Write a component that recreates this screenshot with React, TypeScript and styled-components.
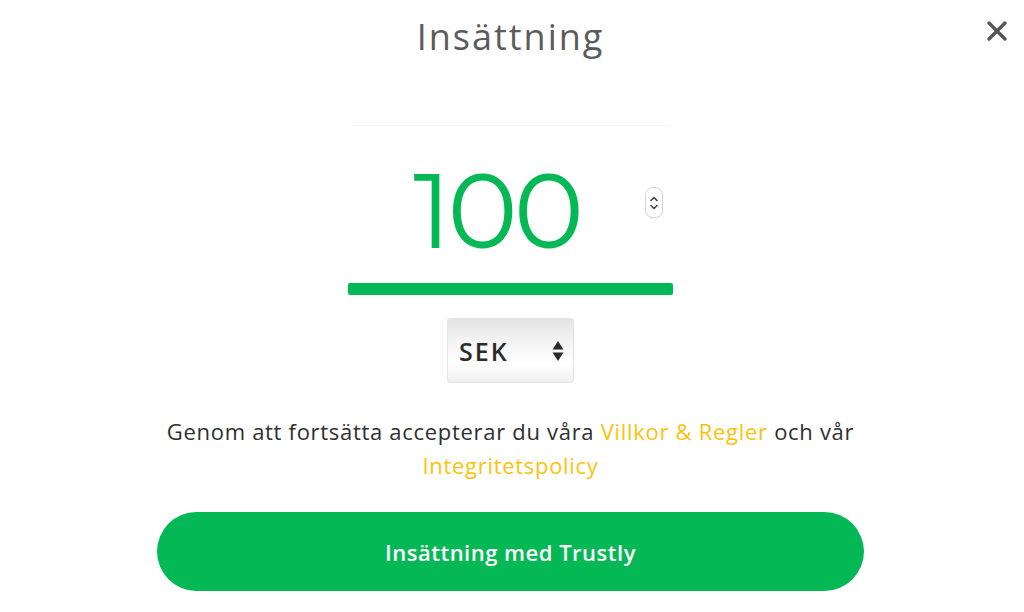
import React from 'react';
import styled, { createGlobalStyle } from 'styled-components';

const GlobalStyle = createGlobalStyle`
    html, body {
        margin: 0;
        padding: 0;
        background: #ffffff;
        font-family: "Open Sans", "Noto Sans", sans-serif;
    }
`;

const Page = styled.div`
    width: 1024px;
    height: 612px;
    box-sizing: border-box;
    padding-right: 3px;
    display: flex;
    flex-direction: column;
    align-items: center;
    overflow: hidden;
`;

const Header = styled.div`
    position: relative;
    width: 100%;
    height: 80px;
    display: flex;
    justify-content: center;
`;

const Title = styled.h1`
    margin: 12px 0 0;
    font-family: "Open Sans", sans-serif;
    font-weight: 400;
    font-size: 36px;
    line-height: 50px;
    letter-spacing: 2px;
    color: #5b5b5b;
`;

const CloseButton = styled.button`
    position: absolute;
    right: 11px;
    top: 18px;
    width: 26px;
    height: 26px;
    padding: 0;
    border: 0;
    background: transparent;
    cursor: pointer;
`;

const AmountBox = styled.div`
    margin-top: 45px;
    width: 325px;
    border-top: 1px solid #f1f4f2;
    border-radius: 6px 6px 0 0;
`;

const AmountRow = styled.div`
    height: 157px;
    display: flex;
    align-items: center;
`;

const AmountValue = styled.div`
    flex: 1;
    text-align: center;
    font-family: "Montserrat", "Open Sans", sans-serif;
    font-weight: 400;
    font-size: 106px;
    line-height: 1;
    color: #05b856;
    padding-top: 10px;
    letter-spacing: -4px;
`;

const Spinner = styled.div`
    width: 16px;
    height: 29px;
    margin-right: 10px;
    margin-top: -4px;
    border: 1px solid #d6d6d6;
    border-radius: 8px;
    display: flex;
    align-items: center;
    justify-content: center;
    box-shadow: 0 1px 1px rgba(0, 0, 0, 0.06);
`;

const Underline = styled.div`
    height: 12px;
    background: #05b856;
    border-radius: 2px;
`;

const CurrencySelect = styled.div`
    margin-top: 23px;
    width: 127px;
    height: 65px;
    box-sizing: border-box;
    padding: 0 10px 0 12px;
    border-radius: 4px;
    background: linear-gradient(#e2e2e2 0%, #f3f3f3 35%, #ffffff 70%, #efefef 100%);
    box-shadow: inset 0 0 0 1px #e4e4e4;
    display: flex;
    align-items: center;
    justify-content: space-between;
    font-family: "Open Sans", sans-serif;
    font-size: 25px;
    font-weight: 600;
    letter-spacing: 2px;
    color: #2b2b2b;
`;

const Terms = styled.p`
    margin: 31px 0 0;
    text-align: center;
    font-family: "Open Sans", sans-serif;
    font-size: 22px;
    line-height: 34px;
    letter-spacing: 0.7px;
    color: #2f2f2f;
`;

const TermsLink = styled.a`
    color: #fcc20c;
    text-decoration: none;
`;

const SubmitButton = styled.button`
    margin-top: 30px;
    width: 707px;
    height: 79px;
    border: 0;
    border-radius: 40px;
    background: #05b856;
    color: #ffffff;
    font-family: "Open Sans", sans-serif;
    font-size: 22px;
    font-weight: 600;
    letter-spacing: 0.5px;
    cursor: pointer;
`;

const App = () => {
    return (
        <Page>
            <GlobalStyle />
            <Header>
                <Title>Insättning</Title>
                <CloseButton aria-label="Stäng">
                    <svg width="26" height="26" viewBox="0 0 26 26">
                        <path d="M5 5L21 21M21 5L5 21" stroke="#555" strokeWidth="3.4" strokeLinecap="round" />
                    </svg>
                </CloseButton>
            </Header>
            <AmountBox>
                <AmountRow>
                    <AmountValue>100</AmountValue>
                    <Spinner>
                        <svg width="10" height="20" viewBox="0 0 10 20">
                            <path d="M2 7.5L5 4.5L8 7.5M2 12.5L5 15.5L8 12.5" stroke="#444" strokeWidth="1.6" fill="none" strokeLinecap="round" strokeLinejoin="round" />
                        </svg>
                    </Spinner>
                </AmountRow>
                <Underline />
            </AmountBox>
            <CurrencySelect>
                <span>SEK</span>
                <svg width="12" height="24" viewBox="0 0 12 24">
                    <path d="M6 2L11.5 10.5H0.5Z M6 22L11.5 13.5H0.5Z" fill="#2b2b2b" />
                </svg>
            </CurrencySelect>
            <Terms>
                Genom att fortsätta accepterar du våra <TermsLink href="#">Villkor &amp; Regler</TermsLink> och vår
                <br />
                <TermsLink href="#">Integritetspolicy</TermsLink>
            </Terms>
            <SubmitButton>Insättning med Trustly</SubmitButton>
        </Page>
    );
};

export default App;
